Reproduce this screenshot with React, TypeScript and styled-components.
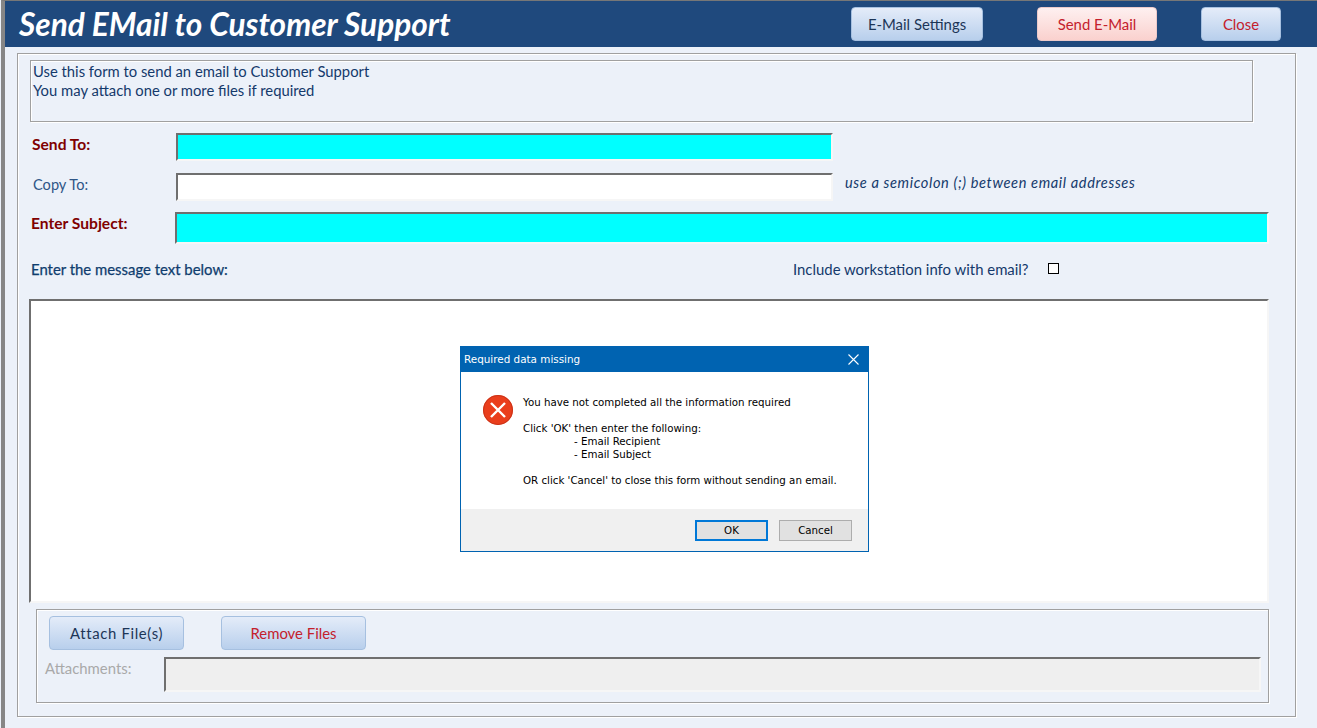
import React from "react";
import styled, { createGlobalStyle } from "styled-components";

const Global = createGlobalStyle`
  html, body { margin: 0; padding: 0; height: 100%; overflow: hidden; background: #ecf1f9; }
  #root { height: 100%; }
`;

const Page = styled.div`
  box-sizing: border-box;
  height: 728px;
  margin-left: 1px;
  border-left: 4px solid #868686;
  border-top: 1px solid #777;
  background: #ecf1f9;
  font-family: Lato, "Liberation Sans", sans-serif;
  color: #14396b;
`;

const Header = styled.header`
  display: flex;
  align-items: center;
  height: 46px;
  background: #1f497d;
  padding-left: 14px;
`;

const Title = styled.h1`
  margin: 0;
  width: 832px;
  font-size: 31.6px;
  font-weight: 700;
  font-style: italic;
  color: #fff;
  white-space: nowrap;
`;

const Btn = styled.button<{ $w: number; $tone?: "red"; $danger?: boolean; $ml?: number; $track?: number }>`
  box-sizing: border-box;
  width: ${(p) => p.$w}px;
  height: 34px;
  margin-left: ${(p) => p.$ml ?? 0}px;
  border-radius: 4px;
  border: 1px solid ${(p) => (p.$tone === "red" ? "#eccaca" : "#a6c0e0")};
  background: ${(p) =>
    p.$tone === "red"
      ? "linear-gradient(#fef0f0, #fad1ce)"
      : "linear-gradient(#e4ecf9, #b8cfec)"};
  color: ${(p) => (p.$danger || p.$tone === "red" ? "#c4202c" : "#1c3557")};
  font-family: inherit;
  font-size: 14.9px;
  letter-spacing: ${(p) => p.$track ?? 0}px;
  line-height: 32px;
  padding: 0;
`;

const Frame = styled.main`
  box-sizing: border-box;
  width: 1279px;
  height: 664px;
  margin: 6px 0 0 12px;
  border: 1px solid #a0a0a0;
  box-shadow: 1px 1px 0 #fff, inset 1px 1px 0 #fff;
  padding: 6px 0 0 12px;
`;

const InfoBox = styled.div`
  box-sizing: border-box;
  width: 1223px;
  height: 62px;
  border: 1px solid #a0a0a0;
  box-shadow: 1px 1px 0 #fff, inset 1px 1px 0 #fff;
  padding: 1px 2px;
  font-size: 14.8px;
  line-height: 19px;
  color: #14396b;
`;

const Row = styled.div<{ $h: number; $mt: number }>`
  display: flex;
  align-items: flex-start;
  height: ${(p) => p.$h}px;
  margin-top: ${(p) => p.$mt}px;
`;

const Label = styled.label<{ $w: number; $tone?: "required" | "muted"; $pl?: number; $size?: number }>`
  box-sizing: border-box;
  width: ${(p) => p.$w}px;
  padding-left: ${(p) => p.$pl ?? 1}px;
  font-size: ${(p) => p.$size ?? 14.6}px;
  line-height: 22px;
  font-weight: ${(p) => (p.$tone === "required" ? 700 : 400)};
  color: ${(p) => (p.$tone === "required" ? "#800000" : p.$tone === "muted" ? "#a9a9a9" : "#2f5687")};
`;

const LooseLabel = styled(Label)`
  line-height: 23px;
`;

const Field = styled.div<{ $w: number; $h: number; $bg: string }>`
  box-sizing: border-box;
  width: ${(p) => p.$w}px;
  height: ${(p) => p.$h}px;
  background: ${(p) => p.$bg};
  border-style: solid;
  border-width: 2px;
  border-color: #6f6f6f #f6f6f6 #f6f6f6 #6f6f6f;
`;

const Hint = styled.span`
  margin-left: 12px;
  font-size: 14.6px;
  font-style: italic;
  letter-spacing: 0.62px;
  line-height: 20px;
  color: #14396b;
`;

const MessageHead = styled.div`
  display: flex;
  align-items: center;
  height: 20px;
  margin-top: 15px;
  padding-left: 1px;
`;

const MessageLabel = styled.span`
  width: 762px;
  font-size: 14.9px;
  -webkit-text-stroke: 0.25px #0f3d6e;
  color: #0f3d6e;
`;

const WorkstationLabel = styled.span`
  width: 255px;
  font-size: 14.9px;
  color: #14396b;
`;

const Checkbox = styled.span`
  box-sizing: border-box;
  width: 11px;
  height: 11px;
  margin-top: -2px;
  border: 1px solid #000;
  background: #fff;
`;

const MessageArea = styled(Field)`
  margin: 20px 0 0 -1px;
`;

const AttachGroup = styled.section`
  box-sizing: border-box;
  width: 1233px;
  height: 94px;
  margin: 6px 0 0 6px;
  border: 1px solid #a0a0a0;
  box-shadow: 1px 1px 0 #fff, inset 1px 1px 0 #fff;
  padding: 6px 0 0 12px;
`;

const AttachButtons = styled.div`
  display: flex;
  gap: 37px;
`;

const AttachRow = styled.div`
  display: flex;
  margin: 7px 0 0 -4px;
`;

const Dialog = styled.div`
  position: absolute;
  left: 460px;
  top: 346px;
  box-sizing: border-box;
  width: 409px;
  height: 206px;
  border: 1px solid #0063b1;
  background: #fff;
  display: flex;
  flex-direction: column;
  font-family: "DejaVu Sans", sans-serif;
  color: #000;
`;

const DialogBar = styled.div`
  display: flex;
  align-items: center;
  justify-content: space-between;
  height: 25px;
  background: #0063b1;
  color: #fff;
  font-size: 10.4px;
  padding: 0 9px 1px 3px;
  box-sizing: border-box;
`;

const DialogBody = styled.div`
  flex: 1;
  display: flex;
  padding: 24px 0 0 22px;
`;

const ErrorIconWrap = styled.div`
  margin-top: -1px;
`;

const DialogText = styled.div`
  margin-left: 10px;
  font-size: 10.25px;
  line-height: 13px;
  white-space: pre;
`;

const Indent = styled.div`
  padding-left: 51px;
`;

const Gap = styled.div`
  height: 13px;
`;

const DialogFoot = styled.div`
  display: flex;
  justify-content: flex-end;
  align-items: center;
  gap: 11px;
  height: 42px;
  background: #f0f0f0;
  padding-right: 16px;
`;

const DialogBtn = styled.button<{ $primary?: boolean }>`
  box-sizing: border-box;
  width: 73px;
  height: 21px;
  padding: 0;
  background: #e1e1e1;
  border: ${(p) => (p.$primary ? "2px solid #0078d7" : "1px solid #adadad")};
  font-family: inherit;
  font-size: 10.25px;
  color: #000;
`;

const CloseIcon = () => (
  <svg width="11" height="11" viewBox="0 0 11 11" fill="none" stroke="#fff" strokeWidth="1.1">
    <path d="M0.5 0.5 L10.5 10.5 M10.5 0.5 L0.5 10.5" />
  </svg>
);

const ErrorIcon = () => (
  <svg width="30" height="30" viewBox="0 0 30 30">
    <circle cx="15" cy="15" r="15" fill="#ea3e1c" />
    <circle cx="15" cy="15" r="14.5" fill="none" stroke="#c9341a" />
    <path d="M8 8 L22 22 M22 8 L8 22" stroke="#fff" strokeWidth="2.4" />
  </svg>
);

export default function App() {
  return (
    <>
      <Global />
      <Page>
        <Header>
          <Title>Send EMail to Customer Support</Title>
          <Btn $w={132}>E-Mail Settings</Btn>
          <Btn $w={120} $ml={54} $tone="red">
            Send E-Mail
          </Btn>
          <Btn $w={80} $ml={44} $danger>
            Close
          </Btn>
        </Header>
        <Frame>
          <InfoBox>
            Use this form to send an email to Customer Support
            <br />
            You may attach one or more files if required
          </InfoBox>
          <Row $h={28} $mt={11}>
            <Label $w={146} $tone="required" $pl={2} $size={15.6}>
              Send To:
            </Label>
            <Field $w={657} $h={28} $bg="#00ffff" />
          </Row>
          <Row $h={28} $mt={12}>
            <LooseLabel $w={146} $pl={3}>
              Copy To:
            </LooseLabel>
            <Field $w={657} $h={28} $bg="#fff" />
            <Hint>use a semicolon (;) between email addresses</Hint>
          </Row>
          <Row $h={32} $mt={11}>
            <LooseLabel $w={145} $tone="required" $size={15.6}>
              Enter Subject:
            </LooseLabel>
            <Field $w={1094} $h={32} $bg="#00ffff" />
          </Row>
          <MessageHead>
            <MessageLabel>Enter the message text below:</MessageLabel>
            <WorkstationLabel>Include workstation info with email?</WorkstationLabel>
            <Checkbox />
          </MessageHead>
          <MessageArea $w={1240} $h={304} $bg="#fff" />
          <AttachGroup>
            <AttachButtons>
              <Btn $w={135} $track={0.65}>
                Attach File(s)
              </Btn>
              <Btn $w={145} $danger>
                Remove Files
              </Btn>
            </AttachButtons>
            <AttachRow>
              <Label $w={119} $tone="muted" $pl={0} $size={14.9}>
                Attachments:
              </Label>
              <Field $w={1097} $h={35} $bg="#efefef" />
            </AttachRow>
          </AttachGroup>
        </Frame>
        <Dialog>
          <DialogBar>
            <span>Required data missing</span>
            <CloseIcon />
          </DialogBar>
          <DialogBody>
            <ErrorIconWrap>
              <ErrorIcon />
            </ErrorIconWrap>
            <DialogText>
              <div>You have not completed all the information required</div>
              <Gap />
              <div>Click 'OK' then enter the following:</div>
              <Indent>- Email Recipient</Indent>
              <Indent>- Email Subject</Indent>
              <Gap />
              <div>OR click 'Cancel' to close this form without sending an email.</div>
            </DialogText>
          </DialogBody>
          <DialogFoot>
            <DialogBtn $primary>OK</DialogBtn>
            <DialogBtn>Cancel</DialogBtn>
          </DialogFoot>
        </Dialog>
      </Page>
    </>
  );
}
